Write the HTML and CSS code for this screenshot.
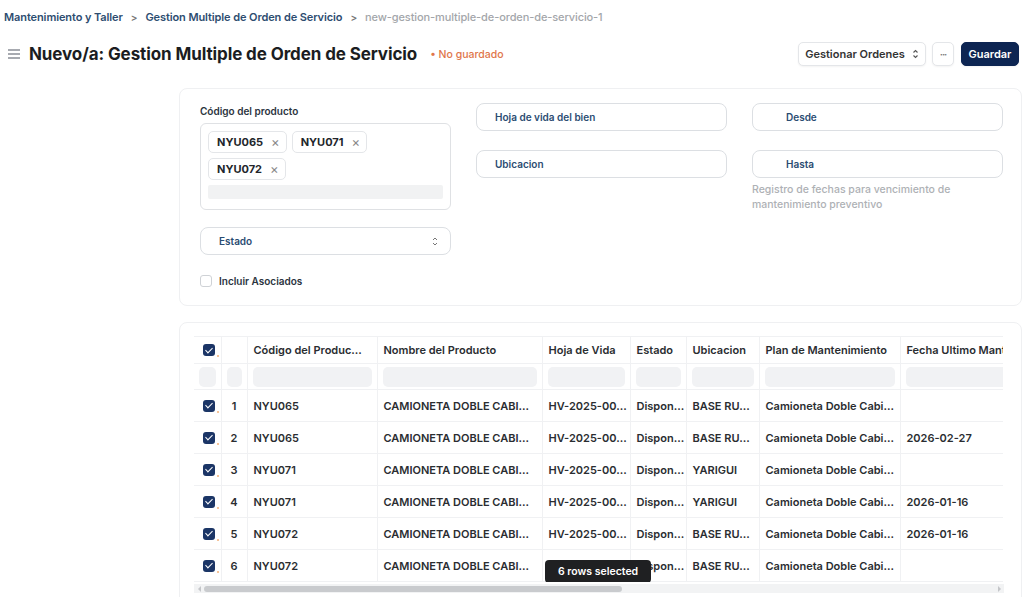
FILE: index.html
```html
<!DOCTYPE html>
<html lang="es">
<head>
    <meta charset="UTF-8">
    <meta name="viewport" content="width=device-width, initial-scale=1.0">
    <title>Gestion Multiple de Orden de Servicio</title>
    <link rel="stylesheet" href="styles.css">
</head>
<body>
    <nav class="breadcrumb">
        <a href="#">Mantenimiento y Taller</a>
        <span class="sep">&gt;</span>
        <a href="#">Gestion Multiple de Orden de Servicio</a>
        <span class="sep">&gt;</span>
        <span class="current">new-gestion-multiple-de-orden-de-servicio-1</span>
    </nav>

    <header class="page-head">
        <svg class="menu-icon" width="14" height="12" viewBox="0 0 14 12">
            <path d="M1 2h12M1 6h12M1 10h12" stroke="#8a8f96" stroke-width="1.4"/>
        </svg>
        <h1>Nuevo/a: Gestion Multiple de Orden de Servicio</h1>
        <span class="status">&bull; No guardado</span>
        <div class="actions">
            <button class="btn btn-menu">Gestionar Ordenes
                <svg width="7" height="10" viewBox="0 0 7 10"><path d="M1.5 3.5 3.5 1.5 5.5 3.5M1.5 6.5 3.5 8.5 5.5 6.5" fill="none" stroke="#555" stroke-width="1.1"/></svg>
            </button>
            <button class="btn btn-dots">&middot;&middot;&middot;</button>
            <button class="btn btn-primary">Guardar</button>
        </div>
    </header>

    <main class="content">
        <section class="card filters">
            <div class="col">
                <label class="field-label">Código del producto</label>
                <div class="multi">
                    <div class="tags">
                        <span class="tag">NYU065 <i>&times;</i></span>
                        <span class="tag">NYU071 <i>&times;</i></span>
                        <span class="tag">NYU072 <i>&times;</i></span>
                    </div>
                    <div class="multi-input"></div>
                </div>
                <div class="input select">
                    <span>Estado</span>
                    <svg width="8" height="11" viewBox="0 0 8 11"><path d="M2 4 4 2 6 4M2 7 4 9 6 7" fill="none" stroke="#777" stroke-width="1"/></svg>
                </div>
                <label class="check-row"><span class="box"></span> Incluir Asociados</label>
            </div>
            <div class="col">
                <div class="input">Hoja de vida del bien</div>
                <div class="input">Ubicacion</div>
            </div>
            <div class="col">
                <div class="input indent">Desde</div>
                <div class="input indent">Hasta</div>
                <p class="help">Registro de fechas para vencimiento de mantenimiento preventivo</p>
            </div>
        </section>

        <section class="card grid-card">
            <div class="grid-scroll">
                <table class="grid">
                    <colgroup>
                        <col class="w-check"><col class="w-num"><col class="w-code"><col class="w-name">
                        <col class="w-hv"><col class="w-state"><col class="w-loc"><col class="w-plan"><col class="w-date">
                    </colgroup>
                    <thead>
                        <tr>
                            <th><span class="cb"></span></th>
                            <th></th>
                            <th>Código del Produc...</th>
                            <th>Nombre del Producto</th>
                            <th>Hoja de Vida</th>
                            <th>Estado</th>
                            <th>Ubicacion</th>
                            <th>Plan de Mantenimiento</th>
                            <th>Fecha Ultimo Mantenimiento</th>
                        </tr>
                        <tr class="filter-row">
                            <td><span class="fbox"></span></td>
                            <td><span class="fbox"></span></td>
                            <td><span class="fbox"></span></td>
                            <td><span class="fbox"></span></td>
                            <td><span class="fbox"></span></td>
                            <td><span class="fbox"></span></td>
                            <td><span class="fbox"></span></td>
                            <td><span class="fbox"></span></td>
                            <td><span class="fbox"></span></td>
                        </tr>
                    </thead>
                    <tbody>
                        <tr><td><span class="cb"></span></td><td class="num">1</td><td>NYU065</td><td>CAMIONETA DOBLE CABI...</td><td>HV-2025-00...</td><td>Dispon...</td><td>BASE RU...</td><td>Camioneta Doble Cabi...</td><td></td></tr>
                        <tr><td><span class="cb"></span></td><td class="num">2</td><td>NYU065</td><td>CAMIONETA DOBLE CABI...</td><td>HV-2025-00...</td><td>Dispon...</td><td>BASE RU...</td><td>Camioneta Doble Cabi...</td><td>2026-02-27</td></tr>
                        <tr><td><span class="cb"></span></td><td class="num">3</td><td>NYU071</td><td>CAMIONETA DOBLE CABI...</td><td>HV-2025-00...</td><td>Dispon...</td><td>YARIGUI</td><td>Camioneta Doble Cabi...</td><td></td></tr>
                        <tr><td><span class="cb"></span></td><td class="num">4</td><td>NYU071</td><td>CAMIONETA DOBLE CABI...</td><td>HV-2025-00...</td><td>Dispon...</td><td>YARIGUI</td><td>Camioneta Doble Cabi...</td><td>2026-01-16</td></tr>
                        <tr><td><span class="cb"></span></td><td class="num">5</td><td>NYU072</td><td>CAMIONETA DOBLE CABI...</td><td>HV-2025-00...</td><td>Dispon...</td><td>BASE RU...</td><td>Camioneta Doble Cabi...</td><td>2026-01-16</td></tr>
                        <tr><td><span class="cb"></span></td><td class="num">6</td><td>NYU072</td><td>CAMIONETA DOBLE CABI...</td><td>HV-2025-00...</td><td>Dispon...</td><td>BASE RU...</td><td>Camioneta Doble Cabi...</td><td></td></tr>
                    </tbody>
                </table>
                <div class="toast">6 rows selected</div>
            </div>
            <div class="hscroll">
                <span class="arrow left"></span>
                <span class="thumb"></span>
                <span class="arrow right"></span>
            </div>
        </section>
    </main>
</body>
</html>
```

FILE: styles.css
```css
* {
    box-sizing: border-box;
}

body {
    margin: 0;
    font-family: 'Inter', 'Liberation Sans', sans-serif;
    background: #ffffff;
    color: #222;
    overflow: hidden;
}

button {
    font-family: inherit;
}

.breadcrumb {
    display: flex;
    align-items: center;
    gap: 8px;
    padding: 8px 4px 0;
    height: 26px;
    font-size: 11px;
    font-weight: 600;
    letter-spacing: -0.1px;
}

.breadcrumb a {
    color: #2d4d70;
    text-decoration: none;
}

.breadcrumb .sep {
    color: #777;
    font-size: 10px;
}

.breadcrumb .current {
    color: #a3a6aa;
    font-weight: 500;
}

.page-head {
    display: flex;
    align-items: center;
    height: 56px;
    padding: 0 5px 0 7px;
}

.menu-icon {
    margin-right: 8px;
}

h1 {
    margin: 0;
    font-size: 17px;
    font-weight: 700;
    color: #1b1d21;
    letter-spacing: -0.1px;
}

.status {
    margin-left: 13px;
    color: #e0764a;
    font-size: 10.5px;
    font-weight: 500;
}

.actions {
    margin-left: auto;
    display: flex;
    gap: 6px;
}

.btn {
    height: 24px;
    padding: 0;
    border: 1px solid #e4e6e9;
    border-radius: 5px;
    background: #fff;
    color: #333;
    font-size: 11px;
    font-weight: 600;
    white-space: nowrap;
    display: flex;
    align-items: center;
    justify-content: center;
    gap: 7px;
    box-shadow: 0 1px 2px rgba(0, 0, 0, 0.05);
}

.btn-menu {
    width: 128px;
}

.btn-dots {
    width: 22px;
    color: #777;
    font-size: 10px;
    letter-spacing: -1px;
}

.btn-primary {
    width: 58px;
    background: #0d2552;
    border-color: #0d2552;
    color: #fff;
    margin-left: 1px;
}

.content {
    padding: 6px 2px 0 179px;
    display: flex;
    flex-direction: column;
    gap: 16px;
}

.card {
    border: 1px solid #eff0f2;
    border-radius: 8px;
    background: #fff;
}

.filters {
    display: grid;
    grid-template-columns: repeat(3, 251px);
    gap: 25px;
    padding: 14px 20px 17px;
    height: 218px;
}

.col {
    display: flex;
    flex-direction: column;
}

.field-label {
    font-size: 10px;
    font-weight: 600;
    color: #2b3440;
    margin: 2px 0 6px;
}

.multi {
    border: 1px solid #dfe1e4;
    border-radius: 6px;
    padding: 7px 7px 9px;
    height: 87px;
}

.tags {
    display: flex;
    flex-wrap: wrap;
    gap: 5px 5px;
}

.tag {
    display: inline-flex;
    align-items: center;
    height: 22px;
    padding: 0 6px 0 8px;
    border: 1px solid #e4e6e9;
    border-radius: 5px;
    font-size: 11px;
    font-weight: 700;
    color: #23262b;
}

.tag i {
    font-style: normal;
    color: #888;
    font-weight: 400;
    font-size: 13px;
    margin-left: 8px;
}

.multi-input {
    margin-top: 5px;
    height: 14px;
    background: #f1f2f3;
    border-radius: 2px;
}

.input {
    height: 28px;
    border: 1px solid #dcdfe3;
    border-radius: 8px;
    display: flex;
    align-items: center;
    padding: 0 18px;
    font-size: 10px;
    font-weight: 600;
    color: #2b4c72;
    margin-bottom: 19px;
}

.input.indent {
    padding-left: 33px;
}

.input.select {
    margin-top: 17px;
    justify-content: space-between;
    padding-right: 11px;
}

.check-row {
    display: flex;
    align-items: center;
    gap: 7px;
    font-size: 10px;
    font-weight: 600;
    color: #2b3440;
    margin-top: 1px;
}

.check-row .box {
    width: 12px;
    height: 12px;
    border: 1px solid #cfd2d6;
    border-radius: 3px;
}

.help {
    margin: -15px 0 0;
    max-width: 205px;
    font-size: 10.5px;
    line-height: 15px;
    color: #aeb1b5;
    font-weight: 500;
}

.grid-card {
    padding: 13px 18px 0 14px;
    height: 300px;
    overflow: hidden;
}

.grid-scroll {
    position: relative;
    overflow: hidden;
}

.grid {
    border-collapse: collapse;
    table-layout: fixed;
    width: 912px;
    font-size: 11px;
    font-weight: 600;
    color: #2a2d31;
}

.w-check { width: 27px; }
.w-num { width: 26px; }
.w-code { width: 130px; }
.w-name { width: 165px; }
.w-hv { width: 88px; }
.w-state { width: 56px; }
.w-loc { width: 73px; }
.w-plan { width: 141px; }
.w-date { width: 206px; }

.grid th,
.grid td {
    border: 1px solid #f0f1f3;
    padding: 0 6px;
    text-align: left;
    white-space: nowrap;
    overflow: hidden;
}

.grid th {
    height: 27px;
    font-weight: 600;
    color: #2a2d31;
}

.grid tbody td {
    height: 32px;
}

.grid .num {
    text-align: center;
    padding: 0;
}

.grid tr > :first-child {
    border-left: none;
    padding: 0 0 0 9px;
}

.filter-row td {
    height: 26px;
    padding: 0 5px;
}

.grid .filter-row td:first-child {
    padding: 0 5px;
}

.fbox {
    display: block;
    height: 20px;
    background: #f1f2f4;
    border-radius: 5px;
}

.cb {
    display: block;
    position: relative;
    width: 12px;
    height: 12px;
    border-radius: 3px;
    background: #1b3566;
}

.cb::before {
    content: "";
    position: absolute;
    left: 3.5px;
    top: 1.5px;
    width: 3px;
    height: 6px;
    border: solid #fff;
    border-width: 0 1.5px 1.5px 0;
    transform: rotate(45deg);
}

.cb::after {
    content: "";
    position: absolute;
    right: -4px;
    bottom: -1px;
    width: 2px;
    height: 2px;
    border-radius: 50%;
    background: #f3b27a;
}

.toast {
    position: absolute;
    left: 351px;
    top: 224px;
    padding: 0 13px;
    height: 23px;
    line-height: 23px;
    background: #1f2022;
    color: #fff;
    font-size: 10.5px;
    font-weight: 600;
    border-radius: 4px;
}

.hscroll {
    display: flex;
    align-items: center;
    height: 9px;
    background: #f2f3f4;
    margin-top: 2px;
    width: 810px;
}

.hscroll .thumb {
    width: 418px;
    height: 6px;
    background: #c9cbce;
    border-radius: 3px;
    margin-left: 3px;
}

.arrow {
    width: 0;
    height: 0;
    border-top: 3px solid transparent;
    border-bottom: 3px solid transparent;
}

.arrow.left {
    border-right: 3px solid #c4c6c9;
    margin-left: 4px;
}

.arrow.right {
    border-left: 3px solid #c4c6c9;
    margin-left: auto;
    margin-right: 3px;
}
```
